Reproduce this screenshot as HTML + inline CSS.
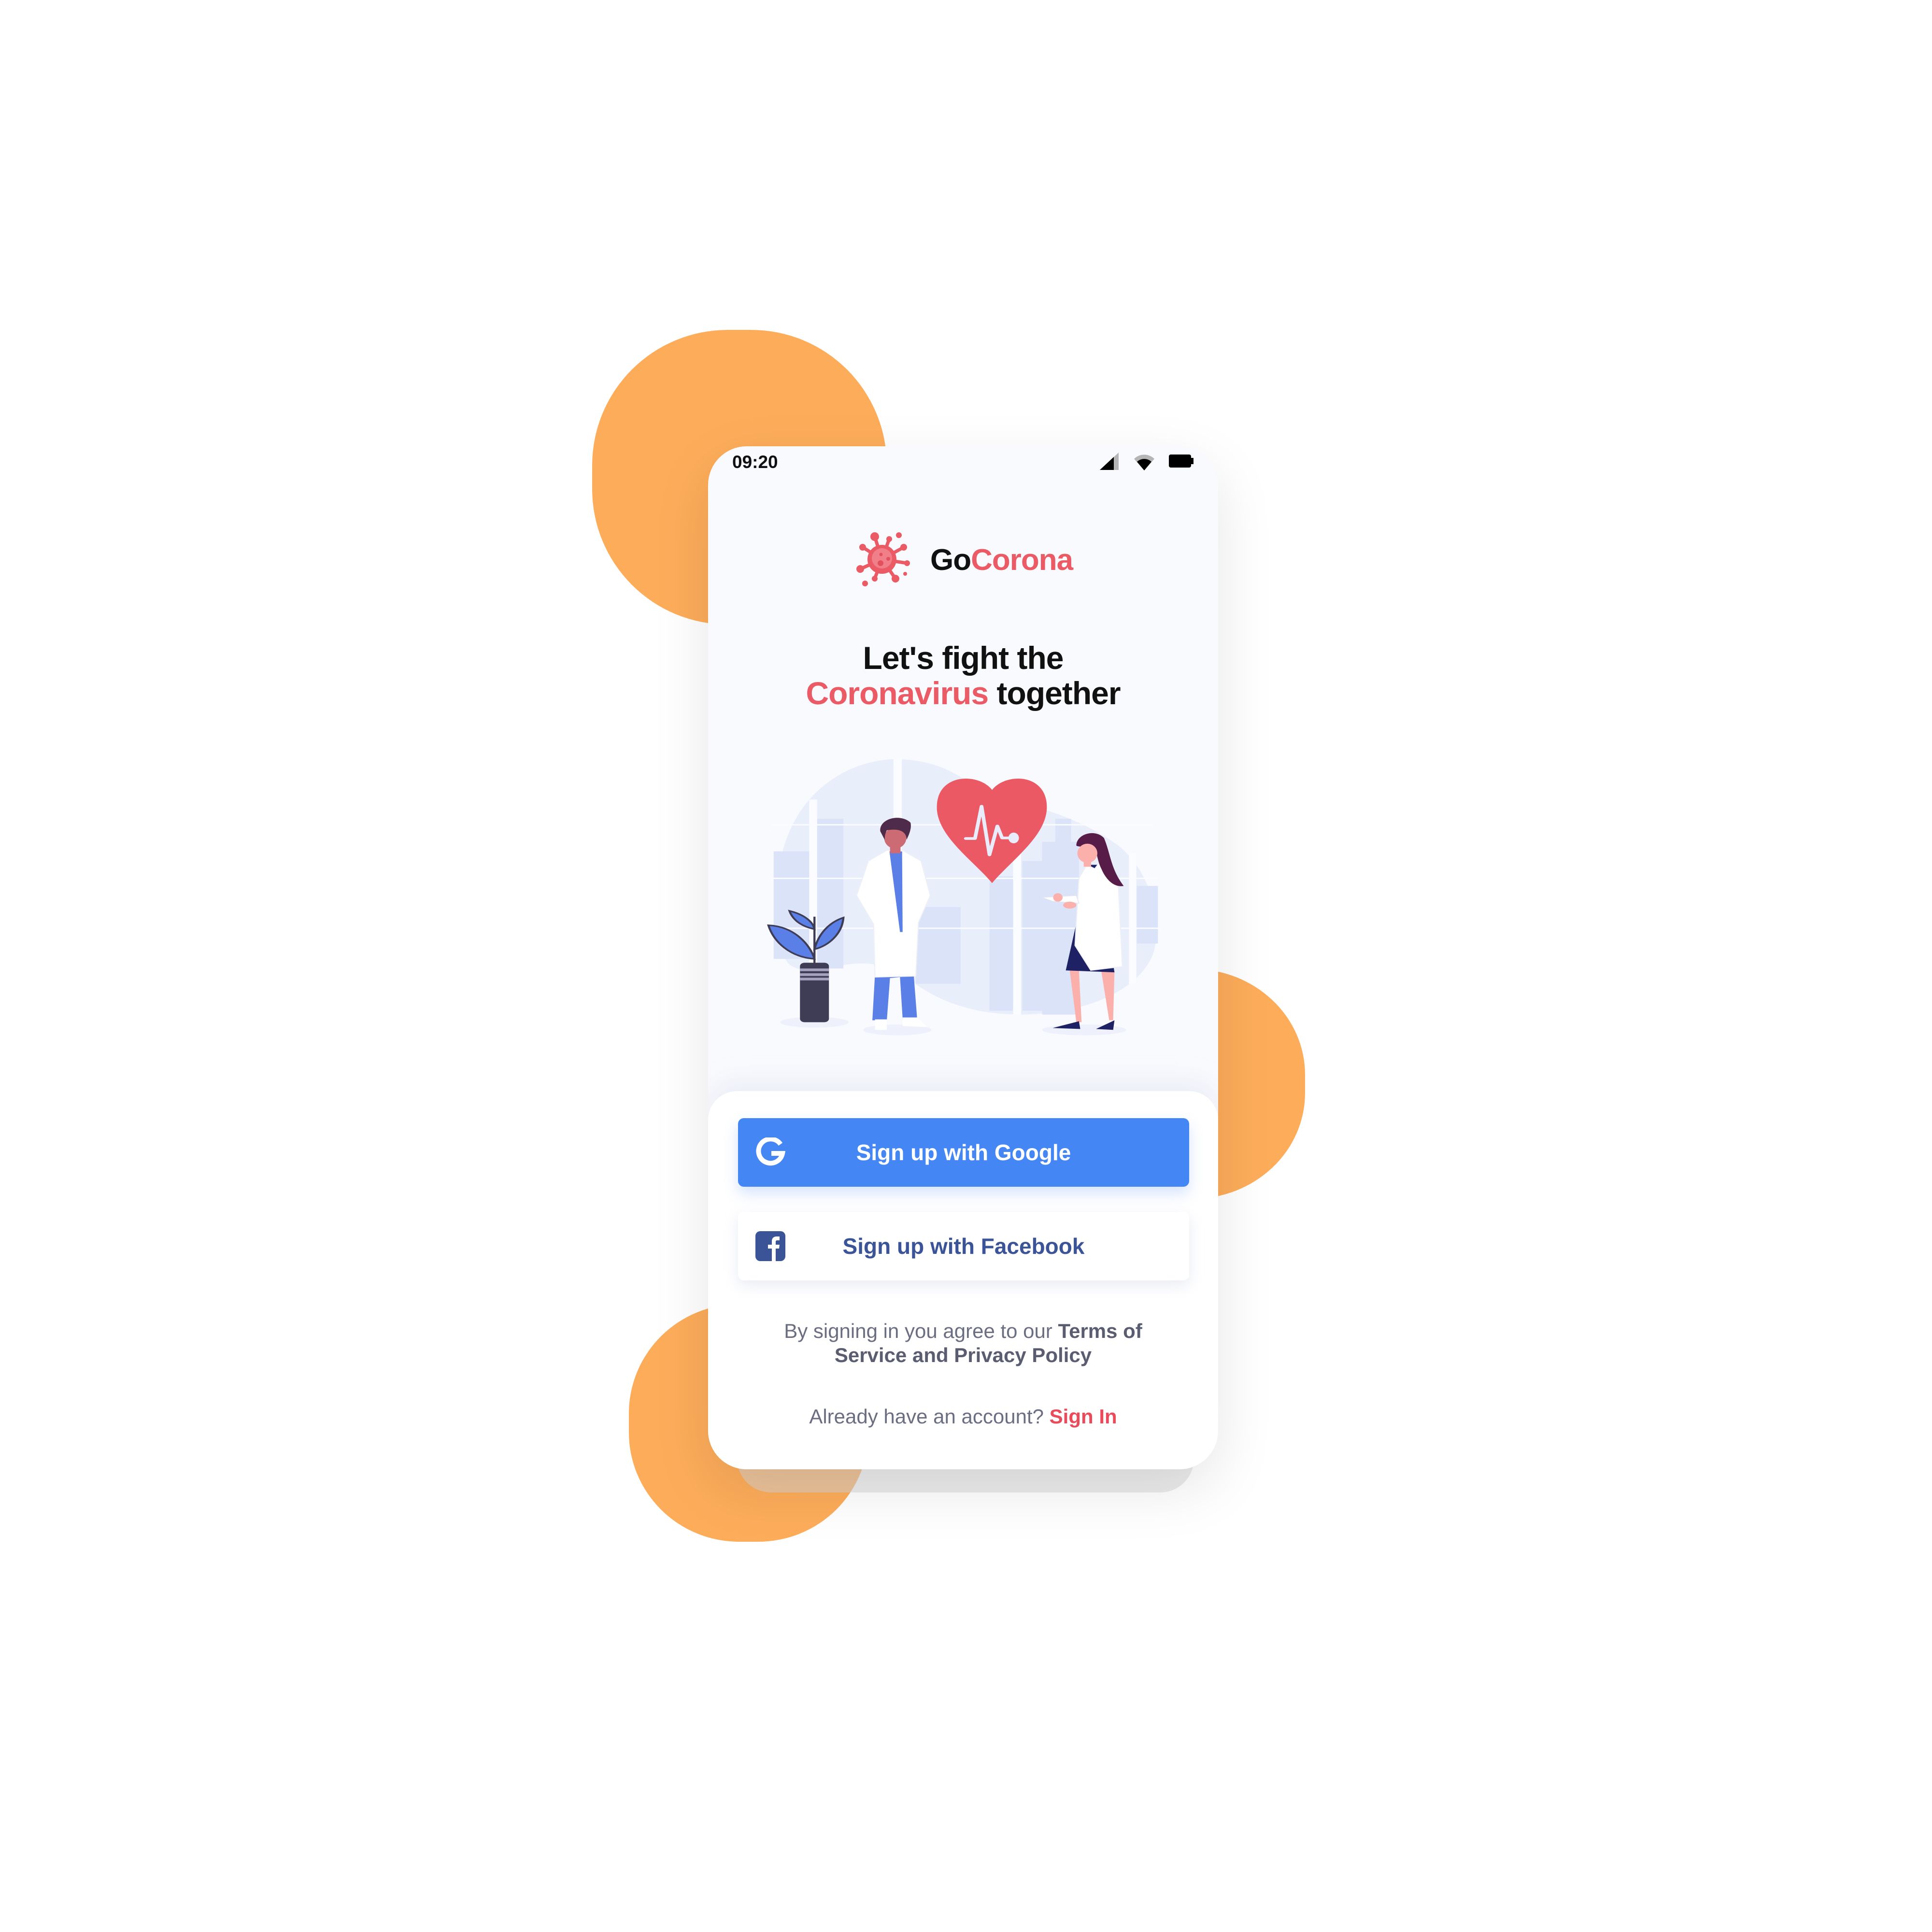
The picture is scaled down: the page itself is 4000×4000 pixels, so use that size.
<!DOCTYPE html>
<html><head><meta charset="utf-8">
<style>
*{margin:0;padding:0;box-sizing:border-box}
html,body{width:4000px;height:4000px;background:#fff;overflow:hidden;font-family:"Liberation Sans",sans-serif}
.blob{position:absolute;background:#fdad5a;border-radius:46%}
.abs{position:absolute}
.phone{position:absolute;left:1466px;top:924px;width:1056px;height:2118px;border-radius:80px;background:#f9fafd;overflow:hidden;box-shadow:0 40px 120px rgba(0,0,0,0.10)}
.under{position:absolute;left:1526px;top:2890px;width:946px;height:200px;border-radius:0 0 70px 70px;background:rgba(215,215,215,0.5)}
.card{position:absolute;left:0;top:1335px;width:1056px;height:800px;background:#fff;border-radius:60px 60px 0 0;box-shadow:0 -20px 50px rgba(210,215,235,0.35)}
.btn{position:absolute;left:62px;width:934px;height:142px;border-radius:12px;font-weight:bold;font-size:46px;text-align:center;line-height:142px}
.t{position:absolute;width:100%;text-align:center}
</style></head><body>
<div class="blob" style="left:1226px;top:683px;width:610px;height:610px"></div>
<div class="blob" style="left:2196px;top:2006px;width:506px;height:476px"></div>
<div class="blob" style="left:1302px;top:2700px;width:496px;height:492px"></div>
<div class="under"></div>
<div class="phone">
  <div class="abs" style="left:50px;top:12px;font-size:37px;font-weight:bold;color:#111">09:20</div>
  <svg class="abs" style="left:0;top:0" width="1058" height="80" viewBox="1466 924 1058 80">
    <polygon points="2277,973 2316,937 2316,973" fill="#b5b5b5"/>
    <polygon points="2277,973 2306,946 2306,973" fill="#000"/>
    <path d="M2348,950 A30,30 0 0 1 2390,950 L2369,974 Z" fill="#b5b5b5"/>
    <path d="M2354,956 A22,22 0 0 1 2384,956 L2369,974 Z" fill="#000"/>
    <rect x="2420" y="941" width="46" height="27" rx="4" fill="#000"/>
    <rect x="2464" y="948" width="7" height="13" fill="#000"/>
  </svg>
  <svg class="abs" style="left:300px;top:174px" width="140" height="130" viewBox="0 0 140 130">
    <g fill="#ea5b66" stroke="#ea5b66" stroke-width="7" stroke-linecap="round">
      <line x1="60" y1="60" x2="45" y2="13"/><line x1="60" y1="60" x2="75" y2="18"/>
      <line x1="60" y1="60" x2="20" y2="35"/><line x1="60" y1="60" x2="105" y2="35"/>
      <line x1="60" y1="60" x2="112" y2="68"/><line x1="60" y1="60" x2="15" y2="80"/>
      <line x1="60" y1="60" x2="45" y2="100"/><line x1="60" y1="60" x2="88" y2="100"/>
    </g>
    <g fill="#ea5b66">
      <circle cx="45" cy="13" r="9"/><circle cx="75" cy="18" r="6"/><circle cx="20" cy="35" r="7"/>
      <circle cx="105" cy="35" r="7"/><circle cx="112" cy="68" r="6"/><circle cx="15" cy="80" r="8"/>
      <circle cx="45" cy="100" r="6"/><circle cx="88" cy="100" r="8"/>
      <circle cx="95" cy="10" r="6"/><circle cx="108" cy="90" r="4"/><circle cx="25" cy="110" r="6"/>
      <circle cx="60" cy="60" r="30"/>
    </g>
    <circle cx="60" cy="58" r="21" fill="#f07f89"/>
    <circle cx="58" cy="50" r="3.5" fill="#e2505c"/><circle cx="73" cy="59" r="4" fill="#e2505c"/><circle cx="57" cy="68" r="6" fill="#e2505c"/>
  </svg>
  <div class="abs" style="left:460px;top:200px;font-size:62px;font-weight:bold;color:#111;letter-spacing:-1px">Go<span style="color:#ea5b66">Corona</span></div>
  <div class="t" style="top:402px;font-size:66px;font-weight:bold;color:#111;line-height:73px;letter-spacing:-1px">Let's fight the<br><span style="color:#ea5b66">Coronavirus</span> together</div>
  <svg class="abs" style="left:114px;top:636px" width="850" height="620" viewBox="0 0 1560 1560" preserveAspectRatio="none">
    <path d="M100,1100 C30,1000 20,600 120,350 C220,100 400,30 500,30 C650,30 750,100 850,230 C1000,250 1200,330 1350,480 C1480,620 1520,900 1480,1050 C1420,1250 1200,1360 980,1360 C750,1360 620,1250 540,1160 C450,1080 350,1080 250,1120 C180,1140 130,1130 100,1100 Z" fill="#e9eefb"/>
    <g fill="#dbe3f8">
      <rect x="205" y="340" width="100" height="780"/><rect x="40" y="510" width="140" height="560"/>
      <rect x="580" y="800" width="170" height="400"/><rect x="860" y="640" width="90" height="700"/>
      <rect x="1060" y="460" width="140" height="900"/><rect x="1110" y="340" width="60" height="140"/>
      <rect x="985" y="560" width="80" height="780"/><rect x="1420" y="690" width="80" height="300"/>
    </g>
    <g fill="#fbfcff">
      <rect x="175" y="240" width="30" height="900"/><rect x="495" y="30" width="32" height="1150"/>
      <rect x="950" y="280" width="30" height="1080"/><rect x="1390" y="520" width="28" height="680"/>
      <rect x="30" y="368" width="1450" height="7"/><rect x="30" y="647" width="1470" height="7"/><rect x="30" y="907" width="1480" height="7"/>
    </g>
    <path d="M870,190 C820,100 660,100 660,280 C660,430 800,560 870,675 C940,560 1078,430 1078,280 C1078,100 920,100 870,190 Z" fill="#eb5a64"/>
    <polyline points="770,443 805,443 830,275 860,528 890,378 908,440 935,440" fill="none" stroke="#e8ecfb" stroke-width="14" stroke-linejoin="round" stroke-linecap="round"/>
    <ellipse cx="952" cy="440" rx="20" ry="28" fill="#e8ecfb"/>
    <ellipse cx="195" cy="1400" rx="130" ry="28" fill="#eef1fb"/>
    <ellipse cx="510" cy="1440" rx="130" ry="28" fill="#eef1fb"/>
    <ellipse cx="1220" cy="1440" rx="160" ry="28" fill="#eef1fb"/>
    <g stroke="#3f3d56" stroke-width="8" fill="#5a7fe6">
      <path d="M20,895 C120,900 180,1000 195,1070 C100,1060 40,980 20,895 Z"/>
      <path d="M100,820 C160,840 190,880 195,915 C140,900 110,860 100,820 Z"/>
      <path d="M305,855 C300,940 250,1000 195,1020 C210,940 250,880 305,855 Z"/>
      <line x1="195" y1="850" x2="195" y2="1095"/>
    </g>
    <rect x="140" y="1090" width="110" height="310" rx="18" fill="#3f3d56"/>
    <rect x="140" y="1120" width="110" height="14" fill="#a5a3bf"/><rect x="140" y="1145" width="110" height="14" fill="#a5a3bf"/><rect x="140" y="1168" width="110" height="14" fill="#a5a3bf"/>
    <path d="M425,1150 L415,1390 L470,1390 L482,1170 L520,1165 L530,1380 L585,1380 L572,1150 Z" fill="#5a7fe6"/>
    <path d="M425,1385 L470,1385 L470,1440 L425,1440 Z M530,1375 L585,1375 L625,1425 L530,1420 Z" fill="#fff"/>
    <path d="M470,505 L400,560 L355,740 L420,890 L425,1165 L580,1160 L590,880 L635,740 L600,560 L530,505 Z" fill="#fff" stroke="#eef0f7" stroke-width="4"/>
    <path d="M480,510 L528,510 L530,930 L520,930 Z" fill="#5a7fe6"/>
    <ellipse cx="502" cy="440" rx="42" ry="55" fill="#cd6b74"/>
    <rect x="482" y="470" width="40" height="50" fill="#cd6b74"/>
    <path d="M445,405 C440,340 520,310 560,360 C565,390 555,420 545,450 C545,400 510,390 470,400 C462,420 462,440 462,450 Z" fill="#4f2b4b"/>
    <path d="M1165,1130 L1200,1130 L1210,1400 L1190,1400 Z M1285,1135 L1335,1135 L1330,1390 L1315,1390 Z" fill="#fbb0ab"/>
    <path d="M1100,1430 L1200,1395 L1205,1435 Z M1265,1435 L1335,1390 L1330,1440 Z" fill="#1e2164"/>
    <path d="M1240,580 L1150,1130 L1335,1140 L1270,580 Z" fill="#1e2164"/>
    <path d="M1230,580 L1200,650 L1185,1000 L1245,1130 L1365,1110 L1350,700 L1280,565 L1260,600 Z" fill="#fff" stroke="#eef0f7" stroke-width="4"/>
    <path d="M1060,750 L1190,740 L1200,780 L1100,770 Z" fill="#fff" stroke="#e3e6f0" stroke-width="3"/>
    <ellipse cx="1165" cy="790" rx="25" ry="18" fill="#fbb0ab"/>
    <ellipse cx="1120" cy="750" rx="18" ry="22" fill="#fbb0ab"/>
    <path d="M1190,480 C1190,420 1260,390 1295,440 C1320,520 1320,600 1370,690 C1330,700 1300,650 1285,600 C1270,560 1270,520 1260,500 C1230,480 1200,490 1190,480 Z" fill="#581c48"/>
    <ellipse cx="1232" cy="520" rx="38" ry="50" fill="#fbb0ab"/>
    <rect x="1218" y="550" width="28" height="40" fill="#fbb0ab"/>
  </svg>
  <div class="card">
    <div class="btn" style="top:56px;background:#4586f5;color:#fff;box-shadow:0 14px 30px rgba(69,134,245,0.22)">Sign up with Google</div>
    <svg class="abs" style="left:98px;top:96px" width="62" height="62" viewBox="0 0 62 62">
      <path d="M52,14 A25,25 0 1 0 56,33 L33,33" fill="none" stroke="#fff" stroke-width="10"/>
    </svg>
    <div class="btn" style="top:250px;background:#fff;color:#3b5498;box-shadow:0 10px 30px rgba(180,190,220,0.3)">Sign up with Facebook</div>
    <svg class="abs" style="left:98px;top:290px" width="62" height="62" viewBox="0 0 62 62">
      <rect x="0" y="0" width="62" height="62" rx="10" fill="#3b5498"/>
      <path d="M34,62 L34,36 L26,36 L26,28 L34,28 L34,21 C34,14 38,11 44,11 L50,11 L50,19 L45,19 C43,19 42,20 42,22 L42,28 L50,28 L49,36 L42,36 L42,62 Z" fill="#fff"/>
    </svg>
    <div class="t" style="top:472px;font-size:42px;line-height:50px;color:#6b6e80">By signing in you agree to our <b style="color:#5a5d70">Terms of<br>Service and Privacy Policy</b></div>
    <div class="t" style="top:650px;font-size:42px;color:#6b6e80">Already have an account? <b style="color:#ea4a5a">Sign In</b></div>
  </div>
</div>
</body></html>
